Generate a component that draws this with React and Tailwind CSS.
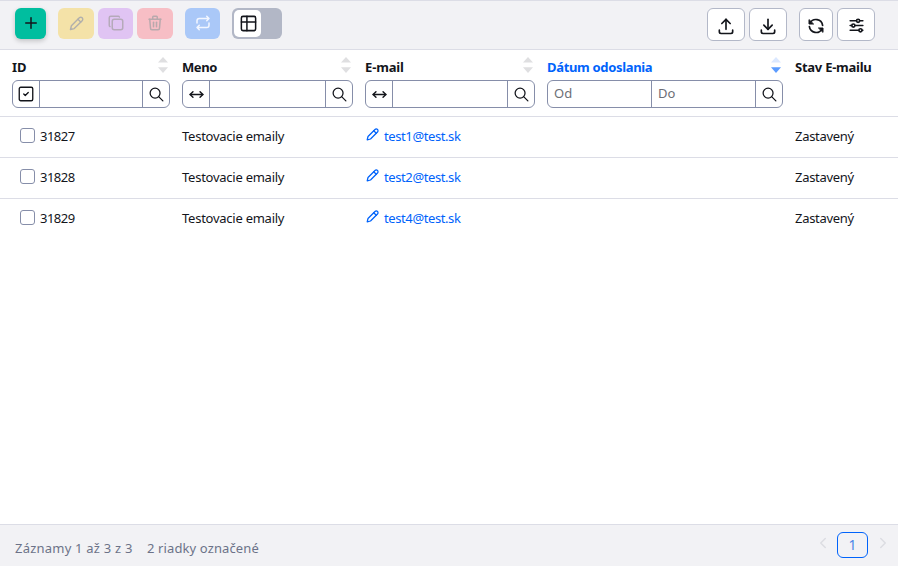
import React from "react";
import {
  TbPlus, TbCopy, TbTrash, TbRepeat, TbTable, TbUpload, TbDownload,
  TbAdjustmentsHorizontal, TbSquareCheck, TbArrowsHorizontal, TbSearch, TbChevronLeft, TbChevronRight,
} from "react-icons/tb";

const rows = [
  { id: "31827", name: "Testovacie emaily", email: "test1@test.sk", state: "Zastavený" },
  { id: "31828", name: "Testovacie emaily", email: "test2@test.sk", state: "Zastavený" },
  { id: "31829", name: "Testovacie emaily", email: "test4@test.sk", state: "Zastavený" },
];

const GRID = "grid grid-cols-[176px_183px_182px_248px_1fr]";

function Pencil({ size, className }) {
  return (
    <svg width={size} height={size} viewBox="0 0 24 24" fill="none" stroke="currentColor" strokeWidth="2" strokeLinecap="round" strokeLinejoin="round" className={className}>
      <path d="M3.5 20.5 4.8 15.2 16 4a2.8 2.8 0 0 1 4 4L8.8 19.2z" />
      <path d="m14 6 4 4" />
    </svg>
  );
}

function Refresh() {
  return (
    <svg width="18" height="18" viewBox="0 0 18 18" fill="none" stroke="currentColor" strokeWidth="1.7" strokeLinecap="round" strokeLinejoin="round">
      <path d="M3 6.2A6.7 6.7 0 0 1 15.6 8.3" />
      <path d="M15 11.8A6.7 6.7 0 0 1 2.4 9.7" />
      <path d="M2 3v4h4.2z" fill="currentColor" strokeWidth="1" />
      <path d="M16 15v-4h-4.2z" fill="currentColor" strokeWidth="1" />
    </svg>
  );
}

function ToolButton({ className, children }) {
  return <button className={`flex h-[31px] items-center justify-center rounded-md ${className}`}>{children}</button>;
}

function OutlineButton({ className, children }) {
  return (
    <button className={`flex h-[33px] items-center justify-center rounded-md border border-[#b3b8c8] bg-white pt-0.5 text-[#13151b] ${className}`}>
      {children}
    </button>
  );
}

function SortArrows({ active }) {
  return (
    <svg width="10" height="16" viewBox="0 0 10 16" className="mt-[7px] mr-0.5 shrink-0">
      <path d="M5 0 10 5.5H0z" fill={active ? "#dbe8ff" : "#dfdfe1"} />
      <path d="M5 16 10 10.3H0z" fill={active ? "#5c9cff" : "#dfdfe1"} />
    </svg>
  );
}

function Filter({ icon, fields = [""] }) {
  return (
    <div className="flex h-7 divide-x divide-[#868ea9] overflow-hidden rounded-md border border-[#868ea9] bg-white text-[#13151b]">
      {icon && <span className="flex w-[27px] shrink-0 items-center justify-center">{icon}</span>}
      {fields.map((f, i) => (
        <input
          key={i}
          placeholder={f}
          className="w-0 min-w-0 flex-1 px-1.5 text-[13px] tracking-[0.1px] outline-none placeholder:text-[#6c6e75]"
        />
      ))}
      <span className="flex w-[26px] shrink-0 items-center justify-center"><TbSearch size={17} strokeWidth={1.8} /></span>
    </div>
  );
}

function HeadCell({ title, titleClass, active, className, children }) {
  return (
    <div className={`pr-1.5 ${className}`}>
      <div className="flex h-[30px] items-start justify-between">
        <span className={`mt-[7px] text-[13px] leading-5 font-bold whitespace-nowrap ${titleClass}`}>{title}</span>
        {children && <SortArrows active={active} />}
      </div>
      {children}
    </div>
  );
}

export default function App() {
  return (
    <div className="flex h-[566px] w-[898px] flex-col overflow-hidden bg-white font-['Noto_Sans','Open_Sans',sans-serif] text-[#13151b]">
      <header className="flex h-[50px] shrink-0 items-start justify-between border-y border-[#dcdde6] bg-[#f2f2f5] pt-[7px] pr-[23px] pl-[15px]">
        <div className="flex">
          <ToolButton className="w-[31px] bg-[#00be9f] shadow-[0_2px_5px_rgba(0,0,0,0.2)]"><TbPlus size={18} className="-mt-px" /></ToolButton>
          <ToolButton className="ml-3 w-9 bg-[#f4e2a8] text-[#b2b0ac]"><Pencil size={17} /></ToolButton>
          <ToolButton className="ml-1 w-[35px] bg-[#e0c4f3] text-[#b5aaba]"><TbCopy size={18} className="-mt-px" /></ToolButton>
          <ToolButton className="ml-1 w-9 bg-[#f7bec5] text-[#b8a9ad]"><TbTrash size={18} className="-mt-px" /></ToolButton>
          <ToolButton className="ml-3 w-[35px] bg-[#aac8f8] text-[#f2f6ff]"><TbRepeat size={18} className="-mt-px" /></ToolButton>
          <div className="ml-3 flex h-[31px] w-[50px] rounded-md bg-[#b2b7c6] p-0.5">
            <span className="flex w-[27px] items-center justify-center rounded-[5px] bg-white pl-px"><TbTable size={19} strokeWidth={1.9} className="-mt-px" /></span>
          </div>
        </div>
        <div className="flex">
          <OutlineButton className="w-[38px]"><TbUpload size={20} /></OutlineButton>
          <OutlineButton className="ml-1 w-[38px]"><TbDownload size={20} /></OutlineButton>
          <OutlineButton className="ml-3 w-[34px]"><Refresh /></OutlineButton>
          <OutlineButton className="ml-1 w-[38px]"><TbAdjustmentsHorizontal size={19} /></OutlineButton>
        </div>
      </header>

      <main className="flex-1">
        <div className={`${GRID} h-[67px] border-b border-[#dcdde6]`}>
          <HeadCell title="ID" className="pl-3" titleClass=""><Filter icon={<TbSquareCheck size={18} strokeWidth={1.8} />} /></HeadCell>
          <HeadCell title="Meno" className="pl-1.5" titleClass="tracking-[-0.4px]"><Filter icon={<TbArrowsHorizontal size={17} />} /></HeadCell>
          <HeadCell title="E-mail" className="pl-1.5" titleClass="tracking-[-0.15px]"><Filter icon={<TbArrowsHorizontal size={17} />} /></HeadCell>
          <HeadCell title="Dátum odoslania" active className="pl-1.5" titleClass="text-[#0063fb] tracking-[-0.33px]"><Filter fields={["Od", "Do"]} /></HeadCell>
          <HeadCell title="Stav E-mailu" className="pl-1.5" titleClass="tracking-[-0.25px]" />
        </div>
        {rows.map((r) => (
          <div key={r.id} className={`${GRID} h-[41px] items-center border-b border-[#dcdde6] pb-[3px] text-[13px] leading-5 last:border-b-0 last:pb-1`}>
            <div className="flex items-center pl-[19.5px]">
              <span className="mr-[5.5px] h-[15px] w-[15px] rounded-[3px] border-[1.5px] border-[#868ea9] bg-white" />
              <span className="tracking-[-0.5px]">{r.id}</span>
            </div>
            <div className="pl-1.5 tracking-[-0.25px]">{r.name}</div>
            <div className="flex items-center pl-1.5 text-[#0063fb]">
              <Pencil size={15} className="mr-1 -mt-0.5" />
              <span className="tracking-[-0.4px]">{r.email}</span>
            </div>
            <div />
            <div className="pl-1.5 tracking-[-0.3px]">{r.state}</div>
          </div>
        ))}
      </main>

      <footer className="flex h-[42px] shrink-0 items-start justify-between border-t border-[#dcdde6] bg-[#f2f2f5] pt-[7px] pr-[6px] pl-[15px]">
        <div className="mt-1.5 flex text-[13px] leading-5 text-[#6c7288]">
          <span className="w-[132px] tracking-[0.22px] whitespace-nowrap">Záznamy 1 až 3 z 3</span>
          <span className="tracking-[0.12px] whitespace-nowrap">2 riadky označené</span>
        </div>
        <div className="flex items-center text-[#dcdde2]">
          <TbChevronLeft size={18} className="mb-1" />
          <span className="mr-1.5 ml-[5px] flex h-[26px] w-[31px] items-center justify-center rounded-md border border-[#0063fb] text-sm text-[#4a87e8]">1</span>
          <TbChevronRight size={18} className="mb-1" />
        </div>
      </footer>
    </div>
  );
}
